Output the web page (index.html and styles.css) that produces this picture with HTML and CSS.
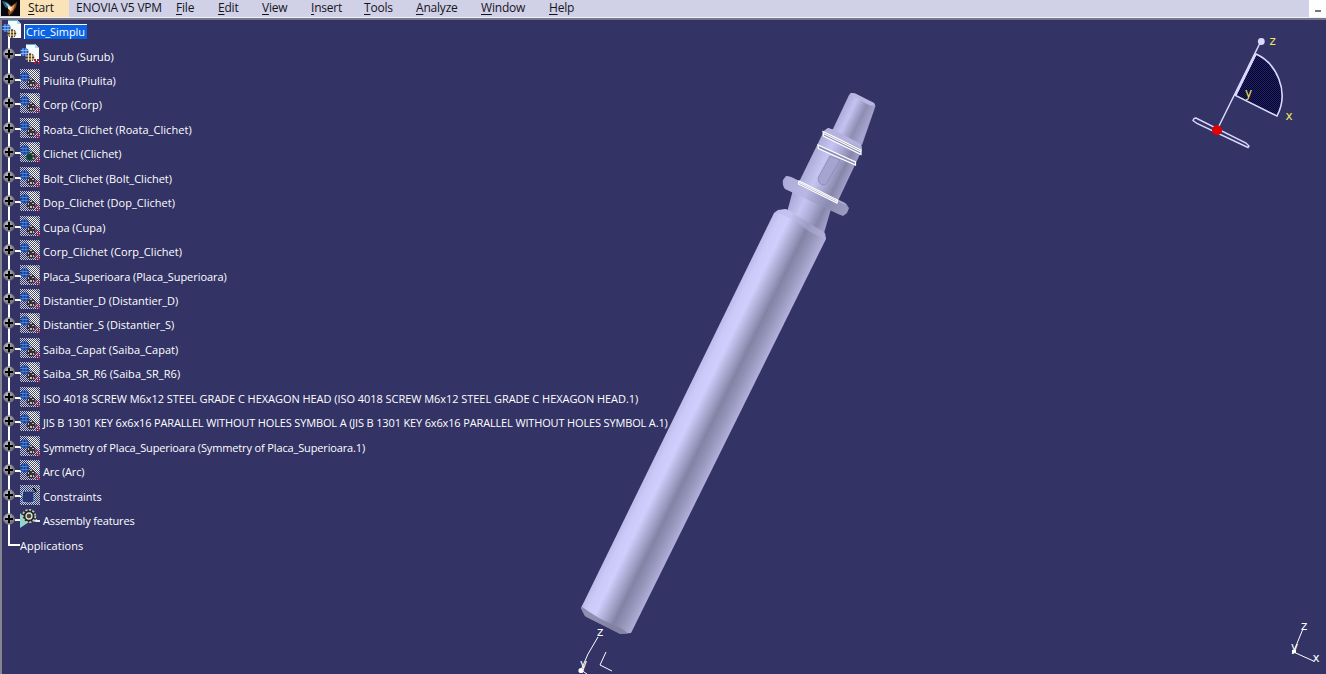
FILE: index.html
```html
<!DOCTYPE html>
<html lang="en">
<head>
<meta charset="utf-8">
<title>Cric_Simplu</title>
<link rel="stylesheet" href="styles.css">
</head>
<body>
<svg class="defs" width="0" height="0">
  <defs>
    <pattern id="chk" width="2" height="2" patternUnits="userSpaceOnUse"><path d="M0 0h1v1H0zM1 1h1v1H1z" fill="#c3cbda"/></pattern>
    <pattern id="chkw" width="2" height="2" patternUnits="userSpaceOnUse"><path d="M0 0h2v2H0z" fill="#4c5064"/><path d="M0 0h1v1H0zM1 1h1v1H1z" fill="#fff"/></pattern>
    <radialGradient id="ball" cx=".4" cy=".35"><stop offset="0" stop-color="#c4c4c4"/><stop offset="1" stop-color="#77777c"/></radialGradient>
    <symbol id="plus" viewBox="0 0 12 12"><circle cx="6" cy="6" r="5.800" fill="url(#ball)"/><path d="M6 2v8M2 6h8" stroke="#000" stroke-width="2"/></symbol>
    <symbol id="product" viewBox="0 0 20 20">
      <path d="M6 0h9l4 4v14H10L6 10z" fill="#f6fbff"/><path d="M15 0v4h4" fill="#b5d4e4"/><path d="M6 .5h9" stroke="#58b8c8"/>
      <circle cx="4.500" cy="8" r="4" fill="#1c55c4"/><path d="M3 4v8M6 4v8M.5 6.500h8M.5 9.500h8" stroke="#8ec0f4" stroke-width=".9"/>
      <circle cx="10" cy="13.500" r="4.200" fill="#3b3020"/><path d="M8.500 9v9M11.500 9v9M5.500 12h9M5.500 15h9" stroke="#f4dfae" stroke-width="1.200"/>
    </symbol>
    <symbol id="part" viewBox="0 0 20 20">
      <path d="M0 0h20v20H0z" fill="url(#chk)"/>
      <path d="M7 1l5 9 7 4V5l-4-4z" fill="url(#chkw)"/>
      <circle cx="4.500" cy="8" r="4.500" fill="#123f9e"/><path d="M3 4v8M6 4v8M.5 6.500h8M.5 9.500h8" stroke="#6aa0df" stroke-width=".6"/>
      <circle cx="11" cy="14" r="4.500" fill="#2a2734" opacity=".9"/><path d="M8 12h1v2H8zM10 10h2v1h-2zM12 12h2v1h-2zM10 15h2v2h-2zM8 16h1v1H8zM13 15h1v2h-1z" fill="#c5b8ae"/>
      <path d="M15 14h2v2h-2zM17 16h3v1h-3zM15 18h2v1h-2zM18 18h2v2h-2z" fill="#b1274b"/>
    </symbol>
    <symbol id="constraints" viewBox="0 0 20 20">
      <path d="M0 0h20v20H0z" fill="url(#chk)"/><path d="M3 6h11v11H3z" fill="#2b3474"/><path d="M2.500 6.500h11v11h-11z" fill="none" stroke="#5da6d0" stroke-dasharray="1.500 1"/><path d="M13 3l3 4" stroke="#16161c" stroke-width="2"/>
    </symbol>
    <symbol id="feature" viewBox="0 0 20 20">
      <path d="M0 4l9 9-9 6z" fill="#8fd6cf"/>
      <circle cx="9" cy="7" r="6.300" fill="#20251f" stroke="#c3c6b8" stroke-width="1.800" stroke-dasharray="2.200 1.400"/><circle cx="9" cy="7" r="3" fill="#40463c" stroke="#e4e6d8" stroke-width="1.300"/>
      <path d="M13 12l4-2v1h3v2h-4z" fill="#e8efe4"/>
    </symbol>
  </defs>
</svg>

<nav class="menubar">
  <svg class="logo" viewBox="0 0 20 17"><path d="M1 0h19v16H1z" fill="#07070c"/><path d="M2 1l5 1 4 4-2 3-4-2z" fill="#28647f"/><path d="M5 3l3 1 3 3-2 1z" fill="#a8d0d4"/><path d="M17 2l-1 5-3 5-4 4-1-4 2-5z" fill="#8d481b"/><path d="M15 4l-2 6-3 2v-4z" fill="#e59b51"/><path d="M8 6l4 1-1 4-3-2z" fill="#f6e3bd"/></svg>
  <span class="item start"><u>S</u>tart</span>
  <span class="item enovia">ENOVIA V5 VPM</span>
  <span class="item"><u>F</u>ile</span>
  <span class="item"><u>E</u>dit</span>
  <span class="item"><u>V</u>iew</span>
  <span class="item"><u>I</u>nsert</span>
  <span class="item"><u>T</u>ools</span>
  <span class="item"><u>A</u>nalyze</span>
  <span class="item"><u>W</u>indow</span>
  <span class="item"><u>H</u>elp</span>
  <span class="minimize"><i class="dash"></i></span>
</nav>

<main class="viewport">
  <ul class="tree">
    <li class="row root"><svg class="icon"><use href="#product"/></svg><span class="label selected">Cric_Simplu</span></li>
    <li class="row surub"><svg class="knob"><use href="#plus"/></svg><svg class="icon"><use href="#product"/><path d="M14 15h2v2h-2zM17 15h2v2h-2zM15 17h3v1h-3zM14 18h2v2h-2zM18 18h2v2h-2z" fill="#a81c30"/></svg><span class="label">Surub (Surub)</span></li>
    <li class="row"><svg class="knob"><use href="#plus"/></svg><svg class="icon"><use href="#part"/></svg><span class="label">Piulita (Piulita)</span></li>
    <li class="row"><svg class="knob"><use href="#plus"/></svg><svg class="icon"><use href="#part"/></svg><span class="label">Corp (Corp)</span></li>
    <li class="row"><svg class="knob"><use href="#plus"/></svg><svg class="icon"><use href="#part"/></svg><span class="label wide">Roata_Clichet (Roata_Clichet)</span></li>
    <li class="row"><svg class="knob"><use href="#plus"/></svg><svg class="icon"><use href="#part"/><circle cx="9.500" cy="15" r="3.500" fill="#123c38" stroke="#2f9b60" stroke-dasharray="2 1"/></svg><span class="label">Clichet (Clichet)</span></li>
    <li class="row"><svg class="knob"><use href="#plus"/></svg><svg class="icon"><use href="#part"/></svg><span class="label">Bolt_Clichet (Bolt_Clichet)</span></li>
    <li class="row"><svg class="knob"><use href="#plus"/></svg><svg class="icon"><use href="#part"/></svg><span class="label wide">Dop_Clichet (Dop_Clichet)</span></li>
    <li class="row"><svg class="knob"><use href="#plus"/></svg><svg class="icon"><use href="#part"/></svg><span class="label">Cupa (Cupa)</span></li>
    <li class="row"><svg class="knob"><use href="#plus"/></svg><svg class="icon"><use href="#part"/></svg><span class="label wide">Corp_Clichet (Corp_Clichet)</span></li>
    <li class="row"><svg class="knob"><use href="#plus"/></svg><svg class="icon"><use href="#part"/></svg><span class="label caps">Placa_Superioara (Placa_Superioara)</span></li>
    <li class="row"><svg class="knob"><use href="#plus"/></svg><svg class="icon"><use href="#part"/></svg><span class="label">Distantier_D (Distantier_D)</span></li>
    <li class="row"><svg class="knob"><use href="#plus"/></svg><svg class="icon"><use href="#part"/></svg><span class="label">Distantier_S (Distantier_S)</span></li>
    <li class="row"><svg class="knob"><use href="#plus"/></svg><svg class="icon"><use href="#part"/></svg><span class="label wide">Saiba_Capat (Saiba_Capat)</span></li>
    <li class="row"><svg class="knob"><use href="#plus"/></svg><svg class="icon"><use href="#part"/></svg><span class="label wide">Saiba_SR_R6 (Saiba_SR_R6)</span></li>
    <li class="row"><svg class="knob"><use href="#plus"/></svg><svg class="icon"><use href="#part"/></svg><span class="label caps">ISO 4018 SCREW M6x12 STEEL GRADE C HEXAGON HEAD (ISO 4018 SCREW M6x12 STEEL GRADE C HEXAGON HEAD.1)</span></li>
    <li class="row"><svg class="knob"><use href="#plus"/></svg><svg class="icon"><use href="#part"/></svg><span class="label key">JIS B 1301 KEY 6x6x16 PARALLEL WITHOUT HOLES SYMBOL A (JIS B 1301 KEY 6x6x16 PARALLEL WITHOUT HOLES SYMBOL A.1)</span></li>
    <li class="row"><svg class="knob"><use href="#plus"/></svg><svg class="icon"><use href="#part"/></svg><span class="label symmetry">Symmetry of Placa_Superioara (Symmetry of Placa_Superioara.1)</span></li>
    <li class="row"><svg class="knob"><use href="#plus"/></svg><svg class="icon"><use href="#part"/></svg><span class="label tight">Arc (Arc)</span></li>
    <li class="row"><svg class="knob"><use href="#plus"/></svg><svg class="icon"><use href="#constraints"/></svg><span class="label">Constraints</span></li>
    <li class="row"><svg class="knob"><use href="#plus"/></svg><svg class="icon"><use href="#feature"/></svg><span class="label tight">Assembly features</span></li>
    <li class="row last"><span class="label wide">Applications</span></li>
  </ul>
</main>

<svg class="scene" viewBox="0 0 1326 674">
  <defs>
    <linearGradient id="body" gradientUnits="userSpaceOnUse" x1="677.500" y1="410" x2="728" y2="434.700">
      <stop offset="0" stop-color="#bdbbe9"/><stop offset=".12" stop-color="#cbc9f8"/><stop offset=".28" stop-color="#d0cefd"/><stop offset=".45" stop-color="#aeadd5"/><stop offset=".65" stop-color="#8483a6"/><stop offset=".82" stop-color="#9695ba"/><stop offset="1" stop-color="#b0aed8"/>
    </linearGradient>
    <linearGradient id="mid" gradientUnits="userSpaceOnUse" x1="812" y1="157" x2="850" y2="175.500">
      <stop offset="0" stop-color="#aeadd9"/><stop offset=".3" stop-color="#c6c4f2"/><stop offset=".55" stop-color="#acaad4"/><stop offset=".8" stop-color="#8786aa"/><stop offset="1" stop-color="#a19fc8"/>
    </linearGradient>
    <linearGradient id="pin" gradientUnits="userSpaceOnUse" x1="841" y1="112" x2="867" y2="124.700">
      <stop offset="0" stop-color="#adabd8"/><stop offset=".3" stop-color="#c4c2f1"/><stop offset=".7" stop-color="#8e8db2"/><stop offset="1" stop-color="#a5a3cd"/>
    </linearGradient>
    <linearGradient id="flange" gradientUnits="userSpaceOnUse" x1="784" y1="180" x2="848" y2="211">
      <stop offset="0" stop-color="#adabd7"/><stop offset=".35" stop-color="#b9b7e4"/><stop offset=".7" stop-color="#8c8bb1"/><stop offset="1" stop-color="#9b9ac2"/>
    </linearGradient>
    <pattern id="mesh" width="2" height="2" patternUnits="userSpaceOnUse"><path d="M0 0h2v2H0z" fill="#222254"/><path d="M0 0h1v1H0zM1 1h1v1H1z" fill="#03033c"/></pattern>
  </defs>

  <g class="screw">
    <path d="M849 95l2-2 4 .5 19 9.500 1.500 3-13.500 39-30-14z" fill="url(#pin)"/>
    <path d="M850 94l1-1 4 .5 19 9.500 1 2.500q-6 1-12-4-7-3-13-7.500z" fill="#b9b7e2"/>
    <path d="M793 190l38 19-7 24-38-17z" fill="url(#mid)"/>
    <path d="M783 180l3-4 5 1 54 26 4 5-2 5-4 3-5-2-53-25q-3-4-2-9z" fill="url(#flange)"/>
    <path d="M786 176l5 1 54 26 3 3-60-25z" fill="#b2b0da" opacity=".8"/>
    <path d="M824 131l4-3 6 2 27 14 1 6-25 53-38-21z" fill="url(#mid)"/>
    <path d="M828 128l6 2 27 14 1 5-38-18z" fill="#b5b3dd"/>
    <path d="M830 156l-12 22q0 5 4 7 4 1 6-4l12-21z" fill="#a5a3cf" stroke="#8584ad" stroke-width=".7"/>
    <path d="M774 213l4-3 8-1 39 24 1 6-193 390-2 4-11 1-35-18-4-8z" fill="url(#body)"/>
    <path d="M775 212l10-3 39 23 2 7q-15-5-24-13-10-8-27-14z" fill="#b8b6e2" opacity=".45"/>
    <path d="M581 606l1 5 4 6 35 17 7 0q-3-4-10-7-20-8-37-21z" fill="#807fa0" opacity=".8"/>
    <g fill="#8d8cb3" stroke="#fff" stroke-width="1.200">
      <path d="M823 131.500l.5 4.500 37.500 18.500v-4.500z"/>
      <path d="M823.500 133.500l37.500 18.500"/>
      <path d="M818 145l.5 3.500 37 16.500v-3z"/>
      <path d="M799 181l-.5 3 38.500 19 .5-3z"/>
      <path d="M799 182.500l38.500 19"/>
    </g>
  </g>

  <g class="compass" fill="none" stroke="#dcd9ff">
    <path d="M1256 54C1276 63 1290 91 1277 116L1235.500 95.500z" fill="url(#mesh)" stroke-width="1.600"/>
    <path d="M1261 41L1217 130" stroke-width="1.500"/><path d="M1255.500 54l-20 41" stroke-width="2.200"/>
    <circle cx="1261.300" cy="41.500" r="3.400" fill="#dcd9ff" stroke="none"/>
    <path d="M1194 118.500l2-.5 50 25 3 3-1 1.500-51-24-4-3z" stroke-width="1.400"/>
    <circle cx="1217" cy="130.300" r="5" fill="#e00000" stroke="none"/>
  </g>
  <g class="axis-label yellow"><text x="1269.500" y="45">z</text><text x="1245" y="97">y</text><text x="1285.500" y="120">x</text></g>

  <g fill="none" stroke="#fff">
    <path d="M598 637l-10 17-7 16 6 4M606 652l-6 13 12 6"/>
    <circle cx="581" cy="670.500" r="2.600" fill="#fff" stroke="none"/>
    <path d="M1302.500 630l-9 22 20 9"/><path d="M1292 650h4v3h-4z" fill="#fff" stroke="none"/>
  </g>
  <g class="axis-label"><text x="597" y="636">z</text><text x="580" y="668">y</text><text x="1301" y="630">z</text><text x="1291" y="651">y</text><text x="1312.500" y="662">x</text></g>
</svg>
</body>
</html>
```
FILE: styles.css
```css
* { box-sizing: border-box; }
body { margin: 0; width: 1326px; height: 674px; overflow: hidden; background: #333366; font-family: "Open Sans", "Noto Sans", sans-serif; }
.defs { position: absolute; }

.menubar {
  display: grid;
  grid-template-columns: 20px 49px 107px 42px 44px 49px 53px 52px 65px 68px 1fr 17px;
  height: 20px;
  background: #d0d0e7;
  border-bottom: 2px solid #77778a;
  box-shadow: inset 0 -1px #f1f1f8;
  font-size: 12px;
  letter-spacing: -.2px;
  line-height: 16px;
  color: #15151c;
}
.logo { width: 20px; height: 17px; }
.item { white-space: nowrap; }
.item u { text-underline-offset: 2px; }
.start { height: 17px; padding-left: 8px; background: #fbe3b9; }
.enovia { padding-left: 7px; }
.minimize { display: flex; justify-content: center; height: 17px; padding-top: 10px; background: #fff; }
.dash { width: 6px; height: 2px; background: #777; }

.viewport { height: 654px; border-left: 2px solid #85858f; }
.tree {
  display: grid;
  grid-auto-rows: 24.46px;
  width: 700px;
  margin: 0;
  padding: 0;
  list-style: none;
  background: linear-gradient(#fff, #fff) 6px 16px / 2px 509px no-repeat;
}
.row { display: grid; grid-template-columns: 12px 6px 20px 1fr; padding-left: 1px; align-items: start; }
.row::before { content: ""; grid-column: 2; grid-row: 1; height: 2px; margin-top: 10px; background: #fff; }
.knob { grid-column: 1; grid-row: 1; width: 12px; height: 12px; margin-top: 4px; }
.icon { grid-column: 3; grid-row: 1; width: 20px; height: 20px; margin: 0 0 0 -1px; }
.label {
  grid-column: 4; grid-row: 1;
  justify-self: start;
  padding-left: 2px;
  font-size: 11px;
  line-height: 14px;
  margin-top: 5px;
  white-space: nowrap;
  color: #fff;
}
.surub .label { margin-top: 6px; }
.wide { letter-spacing: .05px; }
.caps { letter-spacing: -.045px; }
.tight { letter-spacing: -.16px; }
.key { letter-spacing: -.15px; }
.symmetry { letter-spacing: -.14px; }
.root { grid-template-columns: 20px 1fr; padding-left: 0; }
.root::before { display: none; }
.root .icon { grid-column: 1; margin: 0; }
.root .label { grid-column: 2; margin: 4px 0 0 2px; }
.selected { padding: 0 2px 0 1px; letter-spacing: -.05px; background: #0a64e6; border-top: 1px solid #fff; border-left: 1px solid #fff; }
.last { grid-template-columns: 5px 12px 1fr; }
.last::before { margin-top: 10px; }
.last .label { grid-column: 3; padding-left: 0; }

.scene { position: absolute; left: 0; top: 0; width: 1326px; height: 674px; pointer-events: none; }
.axis-label { font-family: "DejaVu Sans", sans-serif; font-size: 12px; fill: #fff; }
.yellow { fill: #eee85c; }
```
